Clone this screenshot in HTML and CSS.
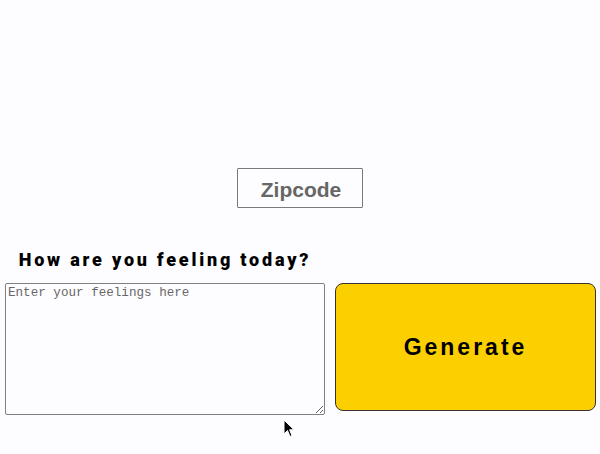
FILE: index.html
```html
<!DOCTYPE html>
<html>
<head>
<meta charset="utf-8">
<link rel="stylesheet" href="styles.css">
</head>
<body>
<main class="page">
  <div class="zip-wrap">
    <input class="zip" type="text" placeholder="Zipcode">
  </div>
  <h2 class="question">How are you feeling today?</h2>
  <div class="row">
    <textarea class="feelings" placeholder="Enter your feelings here"></textarea>
    <button class="generate">Generate</button>
  </div>
</main>
<svg class="cursor" width="12" height="19" viewBox="0 0 12 19">
  <path d="M1 1 L1 15 L4.5 11.5 L7 17.5 L9 16.6 L6.6 10.8 L11 10.8 Z" fill="#000" stroke="#fff" stroke-width="1"/>
</svg>
</body>
</html>
```
FILE: styles.css
```css
html, body {
  margin: 0;
  padding: 0;
  background: #fdfcfe;
}
.page {
  width: 600px;
  height: 454px;
  display: flex;
  flex-direction: column;
}
.zip-wrap {
  padding-top: 168px;
  display: flex;
  justify-content: center;
}
.zip {
  box-sizing: border-box;
  width: 126px;
  height: 40px;
  margin: 0;
  border: 1px solid #7a7a7a;
  border-radius: 1px;
  background: #fdfcfe;
  text-align: center;
  font-family: "Liberation Sans", Arial, sans-serif;
  font-weight: bold;
  font-size: 21px;
  color: #666;
  padding: 3px 0 0 2px;
  outline: none;
}
.zip::placeholder {
  color: #666;
}
.question {
  margin: 0;
  padding: 40px 0 0 0;
  width: 330px;
  text-align: center;
  font-family: Roboto, "Liberation Sans", sans-serif;
  font-weight: 900;
  font-size: 18px;
  letter-spacing: 2.8px;
  line-height: 24px;
  color: #000;
}
.row {
  display: flex;
  gap: 10px;
  padding: 11px 4px 0 5px;
  align-items: flex-start;
}
.feelings {
  box-sizing: border-box;
  width: 320px;
  height: 132px;
  margin: 0;
  border: 1px solid #808080;
  border-radius: 2px;
  background: #fdfcfe;
  font-family: "Liberation Mono", "Courier New", monospace;
  font-size: 12.6px;
  padding: 2px 2px;
  resize: both;
  outline: none;
}
.feelings::placeholder {
  color: #686868;
}
.generate {
  box-sizing: border-box;
  width: 261px;
  height: 128px;
  margin: 0;
  background: #fcd000;
  border: 1.5px solid #3a3230;
  border-radius: 8px;
  font-family: "Liberation Sans", Arial, sans-serif;
  font-weight: bold;
  font-size: 23px;
  letter-spacing: 3px;
  color: #000;
  padding: 0;
}
.cursor {
  position: absolute;
  left: 283px;
  top: 419px;
}
```
